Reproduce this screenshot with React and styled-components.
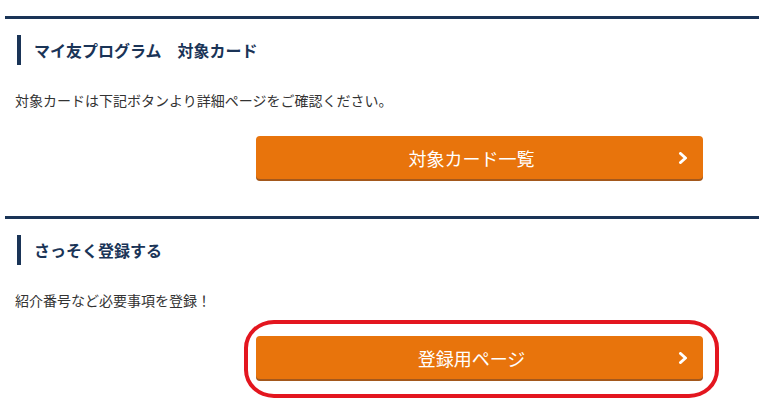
import styled, { createGlobalStyle } from "styled-components"

const Global = createGlobalStyle`
  body {
    margin: 0;
    background: #fff;
    font-family: "Noto Sans CJK JP", "Noto Sans", sans-serif;
    color: #333;
    overflow: hidden;
  }
`

const Page = styled.div`
  padding: 16px 0 0 5px;
  width: 754px;
`

const Section = styled.section`
  border-top: 3px solid #1a3457;
  padding-top: 16px;
  height: 181px;
  box-sizing: content-box;
`

const Heading = styled.h2`
  margin: 0 0 0 12px;
  height: 30px;
  border-left: 4px solid #1a3457;
  padding-left: 13px;
  display: flex;
  align-items: center;
  font-size: 16px;
  font-weight: 700;
  color: #1a3457;
  letter-spacing: 0;
`

const Desc = styled.p`
  margin: 25px 0 0 10px;
  font-size: 14px;
  line-height: 20px;
  color: #333;
`

const ButtonRow = styled.div`
  margin-top: 26px;
  padding-left: 251px;
  display: flex;
`

const ButtonWrap = styled.div`
  position: relative;
`

const Button = styled.a`
  width: 447px;
  height: 43px;
  box-sizing: border-box;
  background: #e8740c;
  border-radius: 4px;
  box-shadow: 0 2px 0 #a3581c;
  display: flex;
  align-items: center;
  justify-content: center;
  position: relative;
  padding-right: 16px;
  color: #fff;
  font-size: 18px;
  text-decoration: none;
  cursor: pointer;

  svg {
    position: absolute;
    right: 15px;
    top: 16px;
  }
`

const Mark = styled.div`
  position: absolute;
  left: -12px;
  top: -16px;
  width: 475px;
  height: 78px;
  box-sizing: border-box;
  border: 4px solid #e3161f;
  border-radius: 30px / 28px;
  pointer-events: none;
`

const Chevron = () => (
  <svg width="10" height="12" viewBox="0 0 10 12">
    <polyline
      points="2.5,1.5 7.5,6 2.5,10.5"
      fill="none"
      stroke="#fff"
      strokeWidth="3"
      strokeLinecap="round"
      strokeLinejoin="round"
    />
  </svg>
)

const Block = ({ title, desc, label, marked }) => (
  <Section>
    <Heading>{title}</Heading>
    <Desc>{desc}</Desc>
    <ButtonRow>
      <ButtonWrap>
        <Button>
          {label}
          <Chevron />
        </Button>
        {marked && <Mark />}
      </ButtonWrap>
    </ButtonRow>
  </Section>
)

export default function App() {
  return (
    <Page>
      <Global />
      <Block
        title="マイ友プログラム　対象カード"
        desc="対象カードは下記ボタンより詳細ページをご確認ください。"
        label="対象カード一覧"
      />
      <Block
        title="さっそく登録する"
        desc="紹介番号など必要事項を登録！"
        label="登録用ページ"
        marked
      />
    </Page>
  )
}
